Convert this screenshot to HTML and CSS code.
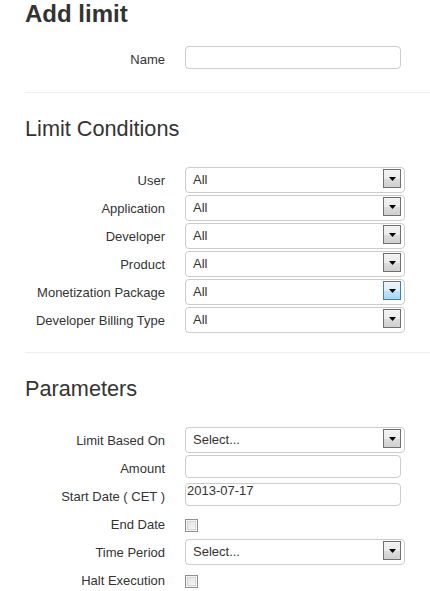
FILE: index.html
```html
<!DOCTYPE html>
<html lang="en">
<head>
<meta charset="utf-8">
<title>Add limit</title>
<link rel="stylesheet" href="styles.css">
</head>
<body>
<div class="page">
  <h2 class="title">Add limit</h2>

  <div class="rows rows-name">
    <div class="row">
      <label class="label">Name</label>
      <input class="text" type="text">
    </div>
  </div>

  <hr class="divider divider-first">

  <h3 class="section">Limit Conditions</h3>
  <div class="rows rows-section">
    <div class="row">
      <label class="label">User</label>
      <div class="select"><span class="select-value">All</span><span class="select-btn"><svg width="7" height="4" viewBox="0 0 7 4"><path d="M0 0H7L3.5 4Z" fill="#000"/></svg></span></div>
    </div>
    <div class="row">
      <label class="label">Application</label>
      <div class="select"><span class="select-value">All</span><span class="select-btn"><svg width="7" height="4" viewBox="0 0 7 4"><path d="M0 0H7L3.5 4Z" fill="#000"/></svg></span></div>
    </div>
    <div class="row">
      <label class="label">Developer</label>
      <div class="select"><span class="select-value">All</span><span class="select-btn"><svg width="7" height="4" viewBox="0 0 7 4"><path d="M0 0H7L3.5 4Z" fill="#000"/></svg></span></div>
    </div>
    <div class="row">
      <label class="label">Product</label>
      <div class="select"><span class="select-value">All</span><span class="select-btn"><svg width="7" height="4" viewBox="0 0 7 4"><path d="M0 0H7L3.5 4Z" fill="#000"/></svg></span></div>
    </div>
    <div class="row">
      <label class="label">Monetization Package</label>
      <div class="select"><span class="select-value">All</span><span class="select-btn select-btn-hover"><svg width="7" height="4" viewBox="0 0 7 4"><path d="M0 0H7L3.5 4Z" fill="#000"/></svg></span></div>
    </div>
    <div class="row">
      <label class="label">Developer Billing Type</label>
      <div class="select"><span class="select-value">All</span><span class="select-btn"><svg width="7" height="4" viewBox="0 0 7 4"><path d="M0 0H7L3.5 4Z" fill="#000"/></svg></span></div>
    </div>
  </div>

  <hr class="divider divider-second">

  <h3 class="section">Parameters</h3>
  <div class="rows rows-section">
    <div class="row">
      <label class="label">Limit Based On</label>
      <div class="select"><span class="select-value">Select...</span><span class="select-btn"><svg width="7" height="4" viewBox="0 0 7 4"><path d="M0 0H7L3.5 4Z" fill="#000"/></svg></span></div>
    </div>
    <div class="row">
      <label class="label">Amount</label>
      <input class="text" type="text">
    </div>
    <div class="row">
      <label class="label">Start Date ( CET )</label>
      <input class="text" type="text" value="2013-07-17">
    </div>
    <div class="row">
      <label class="label">End Date</label>
      <input class="check" type="checkbox">
    </div>
    <div class="row">
      <label class="label">Time Period</label>
      <div class="select"><span class="select-value">Select...</span><span class="select-btn"><svg width="7" height="4" viewBox="0 0 7 4"><path d="M0 0H7L3.5 4Z" fill="#000"/></svg></span></div>
    </div>
    <div class="row">
      <label class="label">Halt Execution</label>
      <input class="check" type="checkbox">
    </div>
  </div>
</div>
</body>
</html>
```

FILE: styles.css
```css
html, body {
  margin: 0;
  padding: 0;
  background: #fff;
}

body {
  font-family: "Liberation Sans", Arial, sans-serif;
  font-size: 13px;
  color: #333;
  overflow: hidden;
}

.page {
  padding-left: 25px;
}

.title {
  margin: 0;
  font-size: 24px;
  line-height: 28px;
  font-weight: bold;
  color: #333;
}

.rows {
  display: flex;
  flex-direction: column;
}

.rows-name {
  margin-top: 18px;
}

.rows-section {
  margin-top: 25px;
}

.row {
  display: flex;
  height: 28px;
}

.label {
  width: 140px;
  margin-right: 20px;
  text-align: right;
  line-height: 28px;
  font-size: 13px;
  color: #333;
  flex-shrink: 0;
}

.text {
  box-sizing: border-box;
  width: 216px;
  height: 23px;
  margin: 0;
  padding: 0 2px 9px 1px;
  border: 1px solid #ccc;
  border-radius: 4px;
  font-family: "Liberation Sans", Arial, sans-serif;
  font-size: 13px;
  line-height: 15px;
  color: #333;
  background: #fff;
  outline: none;
  align-self: flex-start;
}

.select {
  box-sizing: border-box;
  width: 220px;
  height: 26px;
  border: 1px solid #ccc;
  border-radius: 4px;
  display: flex;
  align-items: flex-start;
  background: #fff;
  align-self: flex-start;
}

.select-value {
  flex: 1;
  padding-left: 7px;
  line-height: 24px;
  font-size: 13px;
  color: #333;
}

.select-btn {
  box-sizing: border-box;
  width: 18px;
  height: 19px;
  margin-top: 1px;
  margin-right: 3px;
  border: 1px solid #707070;
  background: linear-gradient(#f3f3f3 0%, #ebebeb 50%, #dddddd 51%, #d0d0d0 100%);
  display: flex;
  align-items: center;
  justify-content: center;
}

.select-btn svg {
  display: block;
  margin-top: 1px;
}

.select-btn-hover {
  border-color: #3c7fb1;
  background: linear-gradient(#eaf6fd 0%, #d9f0fc 50%, #bee6fd 51%, #a7d9f5 100%);
}

.check {
  -webkit-appearance: none;
  appearance: none;
  box-sizing: border-box;
  width: 13px;
  height: 13px;
  margin: 0;
  align-self: center;
  border: 1px solid #8f8f8f;
  background: linear-gradient(135deg, #dcdcdc 0%, #f0f0f0 60%, #fbfbfb 100%);
  box-shadow: inset 0 0 0 1px #f4f4f4, inset 0 0 0 2px #d6d6d6;
}

.divider {
  border: 0;
  border-top: 1px solid #eee;
  height: 0;
  margin: 0;
}

.divider-first {
  margin-top: 18px;
}

.divider-second {
  margin-top: 17px;
}

.section {
  margin: 23px 0 0 0;
  font-size: 21.7px;
  line-height: 26px;
  font-weight: normal;
  color: #333;
}
```
